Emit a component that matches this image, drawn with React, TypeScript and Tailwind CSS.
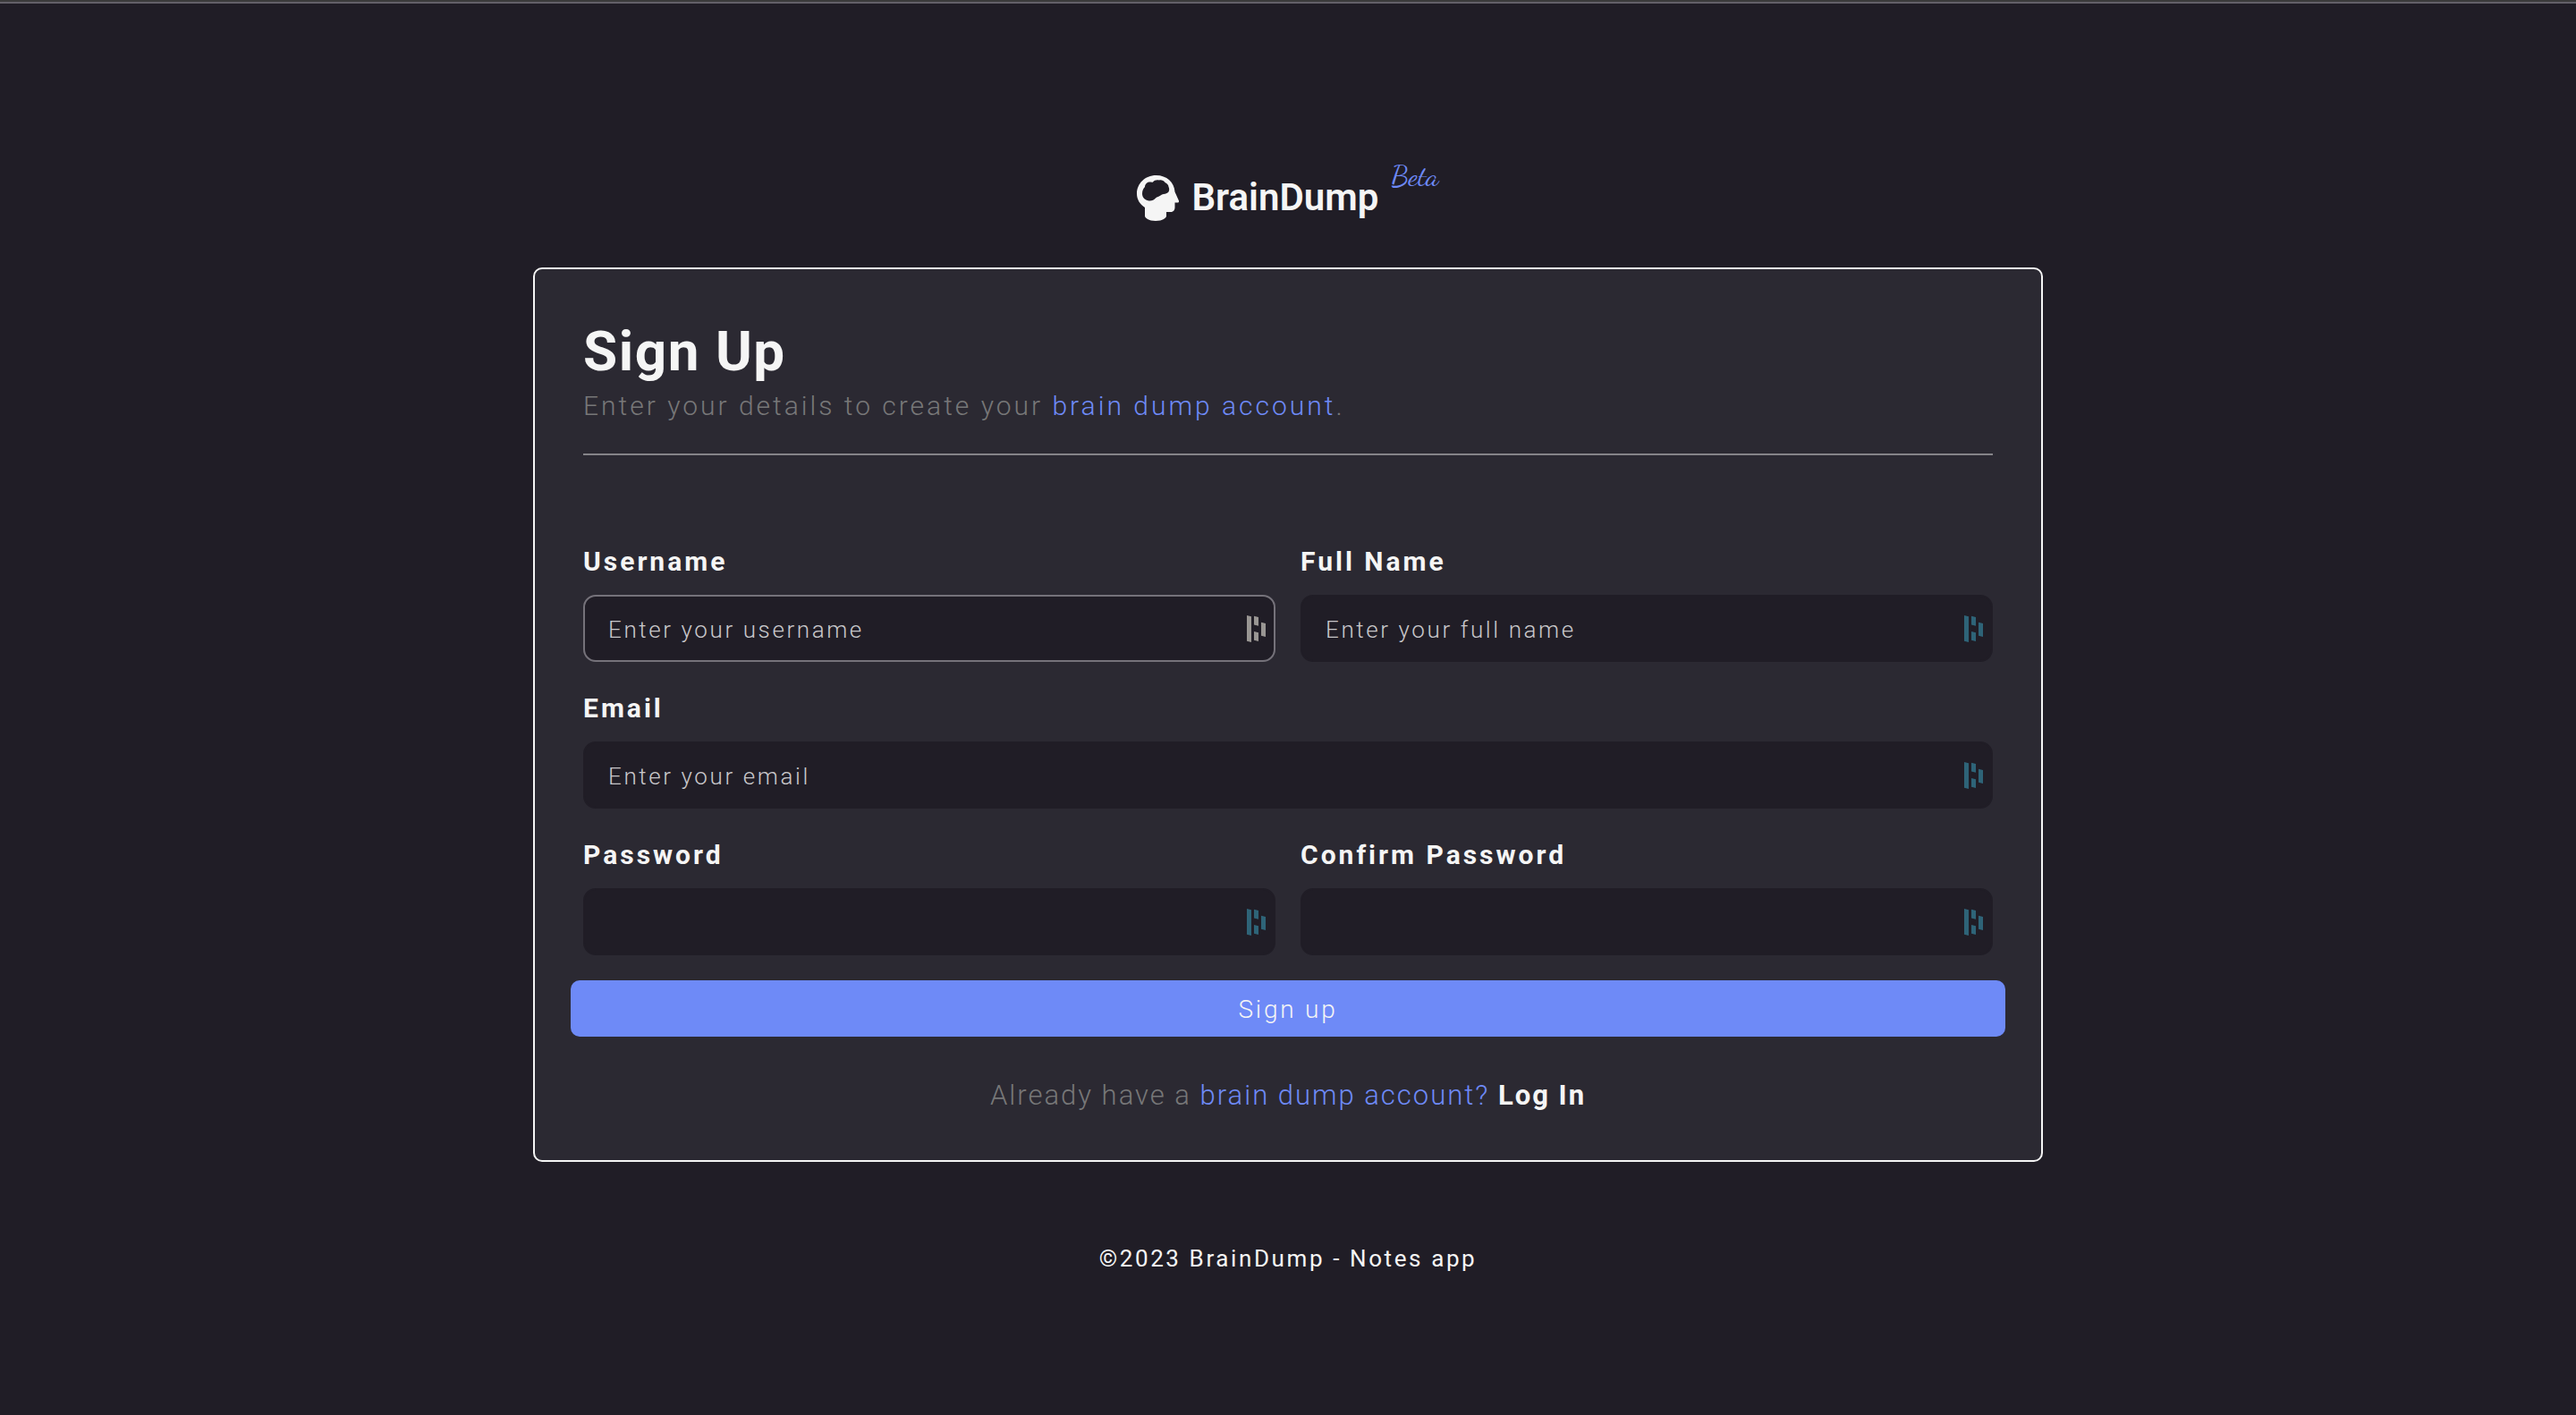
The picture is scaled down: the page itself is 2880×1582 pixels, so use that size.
import React from "react";

type FieldProps = {
  id: string;
  label: string;
  type?: string;
  placeholder?: string;
  active?: boolean;
  wide?: boolean;
};

function FieldMark({ active }: { active?: boolean }) {
  return (
    <svg
      viewBox="0 0 22 30"
      aria-hidden="true"
      className={
        "pointer-events-none absolute top-1/2 right-[10px] h-[30px] w-[22px] -translate-y-1/2 " +
        (active ? "fill-[#999693]" : "fill-[#2e6478]")
      }
    >
      <path d="M0 0l5 1.2V30l-5-1.2z" />
      <path d="M8 .7l5 1.2v9.8l-5-1.2z" />
      <path d="M8 18l5 1.2v9.8l-5-1.2z" />
      <path d="M16 7.7l5 1.2v15l-5-1.2z" />
    </svg>
  );
}

function Field({ id, label, type = "text", placeholder, active, wide }: FieldProps) {
  return (
    <div className={"flex flex-col gap-[14px] " + (wide ? "col-span-2" : "")}>
      <label htmlFor={id} className="text-[30px] leading-[47px] font-bold tracking-widest">
        {label}
      </label>
      <div className="relative">
        <input
          id={id}
          type={type}
          placeholder={placeholder}
          className={
            "h-[75px] w-full rounded-[14px] border-2 bg-[#201d26] px-[26px] pt-[2px] text-[26px] font-light tracking-widest outline-none placeholder:text-[#c8c7ca] " +
            (active ? "border-[#75727a]" : "border-[#201d26]")
          }
        />
        <FieldMark active={active} />
      </div>
    </div>
  );
}

function Logo() {
  return (
    <div className="flex items-start gap-[14px]">
      <div className="flex items-center gap-[14px] pt-[14px]">
        <svg viewBox="0 0 47 51" aria-hidden="true" className="h-[51px] w-[47px]">
          <path
            fill="#f5f5f5"
            d="M21.5 0C9 0 0 9.500 0 20.500c0 6.500 3.500 12 9 15.500v9.500c0 2 4 5.500 12 5.500s12-3.500 12-5.500V41h4.500c3 0 5-2 5-5v-5.500h3c1.300 0 1.800-1 1.400-2.200l-4.400-9.800C42 8 33.500 0 21.500 0z"
          />
          <path
            fill="#201d26"
            d="M6 20.500c0-3.500 1.500-6 3-7.500 0-3.500 3-5.500 5.500-5.500 1.500 0 2.500.5 3.500 0 1.500-2 4-2.500 7-2 2.500-.5 5 .3 6.500 2.500 2.500 1 4 3 4 5 1.500 3 .5 6-2 7-2.500 1.300-5 .8-7 2.500-1.500 1.500-4 1.300-5.500 3-2 2.500-5.500 3.500-8.500 2.700C8 27 6 24 6 20.500z"
          />
        </svg>
        <span className="text-[42px] leading-[54px] font-semibold">BrainDump</span>
      </div>
      <span className="font-['Dancing_Script','Liberation_Serif',cursive] text-[32px] leading-[34px] text-[#6e8af7]">
        Beta
      </span>
    </div>
  );
}

export default function App() {
  return (
    <div className="flex min-h-screen flex-col items-center border-t-2 border-[#3b3b3b] bg-[#201d26] font-['Roboto',sans-serif] text-[#f5f5f5]">
      <div className="h-[2px] w-full bg-[#636068]" />
      <header className="pt-[176px]">
        <Logo />
      </header>
      <main className="mt-[51px] w-full max-w-[1688px] rounded-[10px] border-2 border-[#f5f5f5] bg-[#2b2932] px-[54px] pt-[57px] pb-[44px]">
        <h1 className="text-[62px] leading-[70px] font-bold tracking-wide">Sign Up</h1>
        <p className="text-[30px] leading-[52px] font-light tracking-widest text-[#777778]">
          Enter your details to create your <span className="text-[#6e8af7]">brain dump account</span>.
        </p>
        <hr className="mt-[27px] border-t-2 border-[#858488]" />
        <form className="mt-[95px]" onSubmit={(e) => e.preventDefault()}>
          <div className="grid grid-cols-2 gap-7">
            <Field id="username" label="Username" placeholder="Enter your username" active />
            <Field id="fullname" label="Full Name" placeholder="Enter your full name" />
            <Field id="email" label="Email" type="email" placeholder="Enter your email" wide />
            <Field id="password" label="Password" type="password" />
            <Field id="confirm" label="Confirm Password" type="password" />
          </div>
          <div className="-mx-[14px] mt-7">
            <button
              type="submit"
              className="h-[63px] w-full rounded-[10px] bg-[#6e8af7] pt-[2px] text-[28px] font-light tracking-widest"
            >
              Sign up
            </button>
          </div>
        </form>
        <p className="mt-[38px] text-center text-[31px] leading-[56px] font-light tracking-[2px] text-[#777778]">
          Already have a <span className="text-[#6e8af7]">brain dump account?</span>{" "}
          <a href="#login" className="font-bold text-[#f5f5f5]">
            Log In
          </a>
        </p>
      </main>
      <footer className="mt-[84px] text-[26px] leading-[48px] tracking-widest">
        ©2023 BrainDump - Notes app
      </footer>
    </div>
  );
}
